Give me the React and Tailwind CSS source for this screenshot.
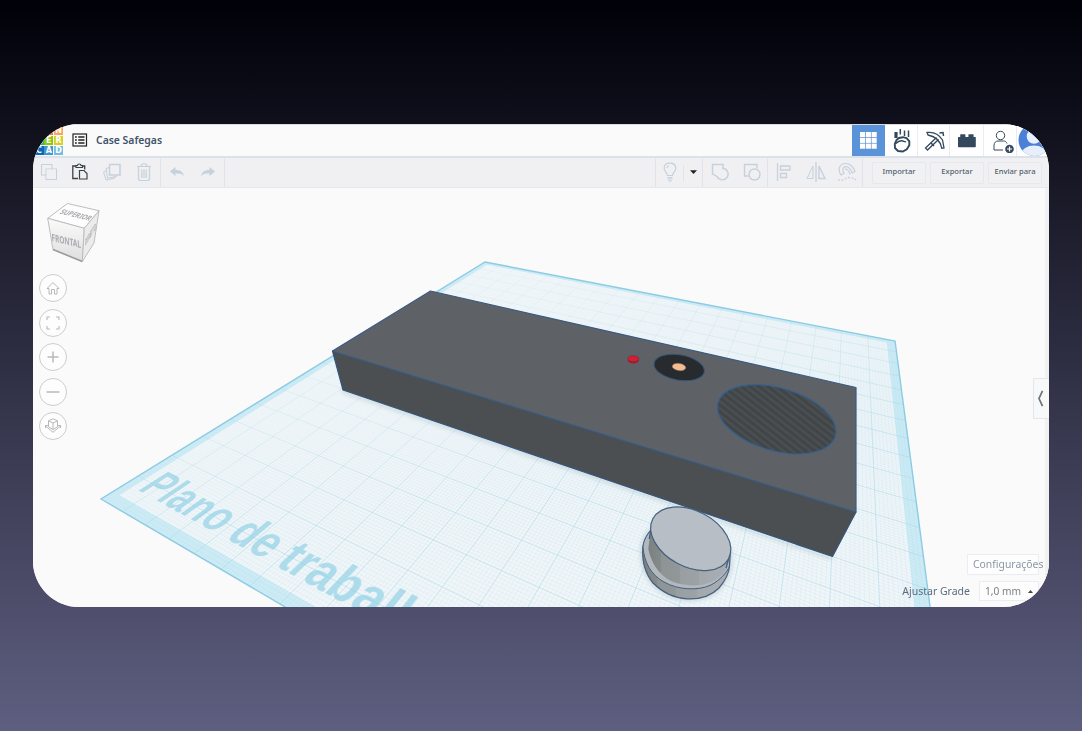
import React from 'react';

// Projective map from workplane coordinates (0..1, 0..1) to the scene.
const H = { a: 363.5, b: 887.9, c: 101, d: -19, e: 35.2, f: 499, g: -0.528, h: 1.039 };
const project = (u, v) => {
  const w = 1 + H.g * u + H.h * v;
  return [(H.a * u + H.b * v + H.c) / w, (H.d * u + H.e * v + H.f) / w];
};
const pts = (list) => list.map(([u, v]) => project(u, v).map((n) => n.toFixed(2)).join(',')).join(' ');
const line = (u1, v1, u2, v2) => {
  const [x1, y1] = project(u1, v1);
  const [x2, y2] = project(u2, v2);
  return `M${x1.toFixed(2)} ${y1.toFixed(2)}L${x2.toFixed(2)} ${y2.toFixed(2)}`;
};

const INSET = 0.0155;
const CELLS = 20;
const gridPath = (n) => {
  let d = '';
  for (let i = 1; i < n; i++) {
    d += line(i / n, 0, i / n, 1) + line(0, i / n, 1, i / n);
  }
  return d;
};
const MAJOR = gridPath(CELLS);
const MINOR = gridPath(CELLS * 10);

// The label lies on a 1000 x 1000 sheet whose y axis points towards the viewer.
const S = 1000;
const OX = 33;
const OY = 188;
const labelMatrix = (() => {
  const k = 1 + H.h;
  const a = H.a / S, b = -H.b / S, c = H.c + H.b;
  const d = H.d / S, e = -H.e / S, f = H.f + H.e;
  const g = H.g / S, h = -H.h / S;
  const m = [
    a - OX * g, d - OY * g, 0, g,
    b - OX * h, e - OY * h, 0, h,
    0, 0, 1, 0,
    c - OX * k, f - OY * k, 0, k,
  ];
  return `matrix3d(${m.join(',')})`;
})();

const Ico = ({ w = 20, h = 20, children, className = '' }) => (
  <svg width={w} height={h} viewBox={`0 0 ${w} ${h}`} fill="none" className={className} stroke="currentColor">
    {children}
  </svg>
);

const LOGO = [
  ['T', 'bg-[#e0403c]'], ['I', 'bg-[#f0703c]'], ['N', 'bg-[#f9a45c]'],
  ['K', 'bg-[#2fb574]'], ['E', 'bg-[#8cc810]'], ['R', 'bg-[#d6d02c]'],
  ['C', 'bg-[#0a68b4]'], ['A', 'bg-[#4096d0]'], ['D', 'bg-[#76bce0]'],
];

function Logo() {
  return (
    <div className="grid grid-cols-3 gap-x-[0.7px] gap-y-[1px] content-start ml-[1.5px] mt-[1px] w-[28.5px] shrink-0">
      {LOGO.map(([ch, bg]) => (
        <span key={ch} className={`${bg} h-[9px] text-white font-['DejaVu_Sans'] text-[8px] leading-[9px] font-bold text-center`}>{ch}</span>
      ))}
    </div>
  );
}

function Header() {
  return (
    <header className="flex h-[34px] shrink-0 border-b-2 border-[#dce2ea] border-t border-t-[#d9d9de] bg-[#fafafa]">
      <Logo />
      <div className="flex items-center pl-[8.5px] gap-[8.500px] h-[29px]">
        <Ico w={16} h={14} className="text-[#222]">
          <rect x="1" y="1" width="13.5" height="12" strokeWidth="1.2" />
          <path d="M3 4h1.8M3 7h1.8M3 10h1.8M6.2 4h6.3M6.2 7h6.3M6.2 10h6.3" strokeWidth="1.6" />
        </Ico>
        <h1 className="pt-[2px] text-[10.4px] font-semibold text-[#40536a] whitespace-nowrap leading-none">Case Safegas</h1>
      </div>
      <nav className="ml-auto flex h-[31px] text-[#34495e] bg-white">
        <div className="w-[33px] bg-[#5b93d8] text-white flex items-center justify-center">
          <svg width="17" height="17" viewBox="0 0 17 17" fill="#fff">
            {[0, 1, 2].map((r) => [0, 1, 2].map((c) => (
              <rect key={`${r}${c}`} x={c * 5.8} y={r * 5.8} width="5.1" height="5.1" />
            )))}
          </svg>
        </div>
        <div className="w-[33px] border-r border-[#ececf0] flex items-center justify-center">
          <Ico w={20} h={26} className="ml-[2px]">
            <path d="M4.500 12L7 10l4-.8 3.500 1 2.800 3v4l-2.500 4-4 2.300-4.800-.5-3-3-.2-4z" strokeWidth="1.900" />
            <path d="M3.800 15.500c2-2 4-3 6-2.800 2 .2 3 1.600 4.200.8" strokeWidth="1.500" />
            <path d="M8.300 1v5.500M12.500 2.500v5.500M16.500 2.500v6.500" strokeWidth="1.500" />
            <path d="M4 4v6" strokeWidth="3.200" />
          </Ico>
        </div>
        <div className="w-[32px] border-r border-[#ececf0] flex items-center justify-center">
          <Ico w={22} h={22} className="ml-[2px]">
            <path d="M3 2.500c6-.8 12 2 15.500 7.500l1.500 8-2.200.3C16.500 11 11.500 6.500 4 5z" strokeWidth="1.3" />
            <path d="M12.500 7.500L1.500 18l2 2L14.500 9.500" strokeWidth="1.300" />
            <path d="M7 13l3 3M15.500 3l3.500-.5.500 3.500" strokeWidth="1.500" />
          </Ico>
        </div>
        <div className="w-[34px] border-r border-[#ececf0] flex items-center justify-center">
          <svg width="18" height="14" viewBox="0 0 18 14" fill="currentColor" className="ml-px">
            <path d="M.5 3h1.700V.8q0-.5.5-.5h4.200q.5 0 .5.5V3h3V.8q0-.5.5-.5h4.200q.5 0 .5.5V3h1.700q.5 0 .5.500v9q0 .8-.8.8H.8q-.8 0-.8-.8v-9q0-.5.5-.500z" />
          </svg>
        </div>
        <div className="w-[33px] border-r border-[#ececf0] flex items-center justify-center">
          <Ico w={24} h={24} className="ml-[4px] mt-px">
            <circle cx="10.500" cy="6.500" r="4.200" strokeWidth="1" />
            <path d="M13 21H4v-4.500c0-3 2-4.500 4-4.500h5.500c1.800 0 3 1 3.500 2.500" strokeWidth="1" />
            <circle cx="19.500" cy="20" r="4.300" fill="currentColor" stroke="none" />
            <path d="M19.500 17.500v5M17 20h5" stroke="#fff" strokeWidth="1.200" />
          </Ico>
        </div>
        <div className="w-[32px] overflow-hidden">
          <svg width="32" height="31" viewBox="0 0 32 31">
            <clipPath id="avatar"><circle cx="17.500" cy="15" r="16" /></clipPath>
            <g clipPath="url(#avatar)">
              <rect width="34" height="32" fill="#4a80d6" />
              <circle cx="17" cy="11.500" r="7.300" fill="#eaf1fc" />
              <ellipse cx="17" cy="29" rx="12.500" ry="8.500" fill="#e6effb" />
            </g>
          </svg>
        </div>
      </nav>
    </header>
  );
}

const Cell = ({ w, border = false, dark = false, children }) => (
  <div className={`${w} h-full flex items-center justify-center shrink-0 pb-px ${border ? 'border-r border-[#e0e4ea]' : ''} ${dark ? 'text-[#3b4347]' : 'text-[#c5d1dc]'}`}>
    {children}
  </div>
);

const ToolButton = ({ w, children }) => (
  <button className={`${w} h-[22px] rounded-[2px] border border-[#e5e8ec] bg-[#f1f1f3] pb-[2px] text-[7.600px] font-medium text-[#51616f] leading-none whitespace-nowrap`}>
    {children}
  </button>
);

function Toolbar() {
  return (
    <div className="flex h-[30px] shrink-0 bg-[#f0eff1] border-b border-[#e5e7ec]">
      <Cell w="w-[31px]"><Ico w={18} h={18}><path d="M1.500 1.500h10.500v10.500H1.500zM6 6h10.500v10.500H6z" strokeWidth="1.100" /><path d="M6.600 6.600h9.300v9.300H6.600z" fill="#f0eff1" stroke="none" /></Ico></Cell>
      <Cell w="w-[31px]" dark>
        <Ico w={18} h={18}>
          <path d="M7 15.500H1.800V3H5M11.500 3h2.200v3.500" strokeWidth="1.300" />
          <path d="M5 4.500V2.500h1.500c0-2 3.500-2 3.500 0h1.500v2z" strokeWidth="1.200" />
          <path d="M8.500 7.500h4.500l3 3v5.500H8.500z" strokeWidth="1.200" />
        </Ico>
      </Cell>
      <Cell w="w-[34px]"><Ico w={20} h={20}><path d="M7.500 2.500H18v10.500H7.500z" strokeWidth="1.500" /><path d="M7 5.500L4 6.500 5.500 16l9-1.500v-1M4 9l-2.500 1 2.500 8 9-2v-1.500" strokeWidth="1" /></Ico></Cell>
      <Cell w="w-[32px]" border>
        <Ico w={16} h={20} className="mr-px"><path d="M1 4.500h14M5 4.500C5 .8 11 .8 11 4.500M2.500 5v11.500q0 2 2 2h7q2 0 2-2V5M5.800 7.500v8.500M8 7.500v8.500M10.200 7.500v8.500" strokeWidth="1.200" /></Ico>
      </Cell>
      <Cell w="w-[31px]"><svg width="16" height="12" viewBox="0 0 16 12" fill="currentColor"><path d="M6.500 1v3c5 0 7.500 2 8.500 6-2-2.200-4.500-2.800-8.500-2.800V10L1 5.500z" /></svg></Cell>
      <Cell w="w-[33px]" border><svg width="16" height="12" viewBox="0 0 16 12" fill="currentColor" className="mr-px"><path d="M9.500 1v3C4.500 4 2 6 1 10c2-2.200 4.500-2.800 8.500-2.800V10L15 5.500z" /></svg></Cell>
      <div className="ml-auto flex border-l border-[#e0e4ea] h-full items-center">
        <Cell w="w-[27px]">
          <Ico w={14} h={20}><path d="M4.500 13.500c0-3-3.300-3.500-3.300-7.300C1.200 3 3.800 1.200 7 1.200s5.800 1.800 5.800 5c0 3.800-3.300 4.300-3.300 7.300zM4.500 15.500h5M4.500 17h5M5.500 18.800h3M4 6c.2-1 .8-1.800 2-2" strokeWidth="1.200" /></Ico>
        </Cell>
        <div className="w-px h-[16px] bg-[#e0e4ea]" />
        <Cell w="w-[19px]" border><svg width="7" height="4" viewBox="0 0 7 4"><path d="M0 .2h7L3.500 3.900z" fill="#222" /></svg></Cell>
        <Cell w="w-[33px]"><Ico w={18} h={18}><path d="M1.500 1.500h10.500v3.800a5.800 5.800 0 1 1-6 8.200L1.500 11z" strokeWidth="1.400" /></Ico></Cell>
        <Cell w="w-[32px]" border><Ico w={18} h={18}><path d="M5.500 13H1.500V1.500H14v4" strokeWidth="1.400" /><circle cx="11.500" cy="11.500" r="5.500" strokeWidth="1.400" /></Ico></Cell>
        <Cell w="w-[32px]"><Ico w={16} h={18}><path d="M1.500 0v18" strokeWidth="1.200" /><path d="M4.500 3h9.500v4H4.500zM4.500 10.500h6v4h-6z" strokeWidth="1.300" /></Ico></Cell>
        <Cell w="w-[31px]"><Ico w={20} h={20}><path d="M10 0v20" strokeWidth="1.300" /><path d="M7 4v12.500H1z" strokeWidth="1" /><path d="M13 4v12.500h6z" strokeWidth="1.400" /></Ico></Cell>
        <Cell w="w-[32px]" border>
          <Ico w={20} h={20}>
            <path d="M4 13C0 7 3 1.500 8.500 1.500c5 0 8 4 9.500 8l-2.800 1.500C14 8 12 4.500 8.700 4.700 5.500 5 5 8 7 11.200z" strokeWidth="1.200" />
            <path d="M8 7.500c2-1 3 .5 4 2.500l1.300 2.500" strokeWidth="1.200" />
            <path d="M1 17.500c5 2.500 8-2 11-2s5 1 7 2.500" strokeWidth="1.300" strokeDasharray="2 1.500" />
          </Ico>
        </Cell>
        <div className="flex pl-[9px] pr-[7px]">
          <ToolButton w="w-[54px]">Importar</ToolButton>
          <div className="w-[4px]" />
          <ToolButton w="w-[54px]">Exportar</ToolButton>
          <div className="w-[4px]" />
          <ToolButton w="w-[54px]">Enviar para</ToolButton>
        </div>
      </div>
    </div>
  );
}

function Workplane() {
  const o = INSET, i = 1 - INSET;
  return (
    <svg className="absolute inset-0" width="1016" height="419" viewBox="33 188 1016 419">
      <defs>
        <linearGradient id="minorFade" gradientUnits="userSpaceOnUse" x1="560" y1="262" x2="600" y2="480">
          <stop offset="0" stopColor="#8fd0e2" stopOpacity=".015" />
          <stop offset=".5" stopColor="#8fd0e2" stopOpacity=".08" />
          <stop offset="1" stopColor="#8fd0e2" stopOpacity=".24" />
        </linearGradient>
        <linearGradient id="majorFade" gradientUnits="userSpaceOnUse" x1="560" y1="262" x2="600" y2="480">
          <stop offset="0" stopColor="#93cfe0" stopOpacity=".09" />
          <stop offset=".5" stopColor="#93cfe0" stopOpacity=".22" />
          <stop offset="1" stopColor="#93cfe0" stopOpacity=".38" />
        </linearGradient>
      </defs>
      <polygon points={pts([[0, 0], [1, 0], [1, 1], [0, 1]])} fill="#cdebf5" />
      <polygon points={pts([[o, o], [i, o], [i, i], [o, i]])} fill="#f0f5f8" />
      <path d={MINOR} stroke="url(#minorFade)" strokeWidth="0.5" />
      <path d={MAJOR} stroke="url(#majorFade)" strokeWidth="0.9" fill="none" />
      <polygon points={pts([[0, 0], [1, 0], [1, 1], [0, 1]])} fill="none" stroke="#8ccbe3" strokeWidth="1.400" />
    </svg>
  );
}

const RING = 'M642.800 548C642 560 644 572 653 583C662 592 674 598 687 598.800C700 599.500 711 596 719 588C725 581 729 574 729.500 566L730 553L700 530L651 530C646 536 643.500 541 642.800 548Z';
const SLATS = Array.from({ length: 26 }, (_, i) => `M-70 ${-70 + i * 5.5}H70`).join('');

function Solids() {
  return (
    <svg className="absolute inset-0" width="1016" height="419" viewBox="33 188 1016 419">
      <defs>
        <clipPath id="grille"><ellipse cx="776.700" cy="419.300" rx="61" ry="31.500" transform="rotate(16 776.700 419.300)" /></clipPath>
        <linearGradient id="side">
          <stop offset="0" stopColor="#7c8081" /><stop offset=".16" stopColor="#858a8b" />
          <stop offset=".16" stopColor="#8e9394" /><stop offset=".38" stopColor="#92989a" />
          <stop offset=".38" stopColor="#999fa1" /><stop offset=".62" stopColor="#9ca2a5" />
          <stop offset=".62" stopColor="#a3a8ac" /><stop offset="1" stopColor="#a9aeb5" />
        </linearGradient>
        <filter id="soft"><feGaussianBlur stdDeviation="2" /></filter>
      </defs>
      <path d="M342 391L832 558" stroke="#8aa6b4" strokeWidth="3" opacity=".4" filter="url(#soft)" />
      <g strokeLinejoin="round">
        <path d="M332.500 351L856 512L832.500 556.500L343 390Z" fill="#4b4f51" stroke="#34557c" strokeWidth="1.200" />
        <path d="M430.500 291L856 387.500V512L332.500 351Z" fill="#5e6266" stroke="#3a5c84" strokeWidth="1.200" />
      </g>
      <ellipse cx="633.300" cy="360.500" rx="5.500" ry="3" fill="#b0141f" />
      <ellipse cx="633.300" cy="358.700" rx="5.600" ry="3" fill="#dc1c2a" stroke="#5c3a5e" strokeWidth=".8" />
      <ellipse cx="679.200" cy="367.500" rx="25.500" ry="12.700" transform="rotate(10 679.200 367.500)" fill="#282b2e" stroke="#35567d" strokeWidth="1" />
      <ellipse cx="679" cy="367" rx="6.800" ry="3.600" transform="rotate(8 679 367)" fill="#f3bd94" stroke="#8a6a58" strokeWidth=".5" />
      <g clipPath="url(#grille)">
        <rect x="715" y="382" width="124" height="76" fill="#494e50" />
        <path d={SLATS} transform="translate(776.700 419.300) rotate(38)" stroke="#414547" strokeWidth="2.700" />
      </g>
      <ellipse cx="776.700" cy="419.300" rx="61" ry="31.500" transform="rotate(16 776.700 419.300)" fill="none" stroke="#35618f" strokeWidth="1.300" />

      <path d={RING} stroke="#9fb4c0" strokeWidth="4" fill="none" opacity=".5" filter="url(#soft)" />
      <path d={RING} fill="url(#side)" stroke="#46607e" strokeWidth="1.200" />
      <path d="M643 547C644 562 651 575 664 582C678 590 698 591 711 585C720 580 727 573 729.500 566L730 553L700 530L651 530C646 536 643.500 541 643 547Z" fill="#b1b8be" stroke="#46607e" strokeWidth="1" />
      <path d="M650.500 531L648.300 549C651 562 658 574 671 581C685 587 704 587 715 580C723 575 728 569 728.500 563L730.500 552Z" fill="url(#side)" />
      <path d="M650.500 531L649.300 539M730.500 552L726 568" stroke="#46607e" strokeWidth="1.300" fill="none" />
      <ellipse cx="690.700" cy="538.700" rx="42.800" ry="28" transform="rotate(27.800 690.700 538.700)" fill="#b7bec5" stroke="#46607e" strokeWidth="1.200" />
    </svg>
  );
}

function ViewCube() {
  return (
    <svg width="56" height="62" viewBox="46 201 56 62" className="block overflow-visible">
      <defs>
        <linearGradient id="cubeFront" x1="0" y1="0" x2="0" y2="1"><stop offset="0" stopColor="#fbfbfb" /><stop offset="1" stopColor="#dedede" /></linearGradient>
      </defs>
      <g stroke="#bdbdbd" strokeWidth="1" strokeLinejoin="round">
        <path d="M67.500 203.500L99 210.700L84.300 228.300L47.700 218.300Z" fill="#fdfdfd" />
        <path d="M47.700 218.300L84.300 228.300L82.300 261.500L53 249.500Z" fill="url(#cubeFront)" />
        <path d="M84.300 228.300L99 210.700L94 243L82.300 261.500Z" fill="#ececec" />
        <path d="M53 249.500L82.300 261.500" stroke="#9c9c9c" strokeWidth="1.400" />
      </g>
      <g fill="#a9abb0" fontWeight="700" fontFamily="'Noto Sans', sans-serif">
        <text transform="matrix(.96 .24 .05 1 51.800 240.800)" fontSize="10" textLength="30.500" lengthAdjust="spacingAndGlyphs">FRONTAL</text>
        <text transform="matrix(.97 .23 -.75 .75 59 213.500)" fontSize="8" textLength="31" lengthAdjust="spacingAndGlyphs">SUPERIOR</text>
        <text transform="matrix(.55 -.9 0 1 85.300 246)" fontSize="9" textLength="19" lengthAdjust="spacingAndGlyphs">DIREITO</text>
      </g>
    </svg>
  );
}

const Round = ({ children }) => (
  <button className="w-[28px] h-[28px] rounded-full border border-[#cccccc] bg-[#fdfdfd] text-[#b9b9b9] flex items-center justify-center">
    {children}
  </button>
);

function Viewport() {
  return (
    <main className="relative flex-1 overflow-hidden bg-[#fafafa]">
      <Workplane />
      <div
        className="absolute left-0 top-0 w-[1000px] h-[1000px] origin-top-left"
        style={{ transform: labelMatrix }}
      >
        <span className="absolute left-[26px] top-[906px] font-['Liberation_Sans'] font-bold text-[62px] leading-[80px] text-[#84cbe2]/60 whitespace-nowrap">
          Plano de trabalho
        </span>
      </div>
      <Solids />
      <div className="absolute right-0 top-0 h-full w-[4px] bg-[#f1f1f3]" />
      <div className="relative flex h-full justify-between">
        <div className="flex flex-col pl-[6.300px] pt-[13px]">
          <div className="pl-[6.700px]"><ViewCube /></div>
          <div className="flex flex-col gap-[6.500px] pt-[11px]">
            <Round><Ico w={14} h={14}><path d="M1 7.500L7 1.500l6 6H11V13H8.500V8.500h-3V13H3V7.500z" strokeWidth="1" /></Ico></Round>
            <Round><Ico w={14} h={14}><path d="M1 4V1h3M10 1h3v3M13 10v3h-3M4 13H1v-3" strokeWidth="1.100" /></Ico></Round>
            <Round><Ico w={12} h={12}><path d="M6 .5v11M.5 6h11" strokeWidth="1.500" /></Ico></Round>
            <Round><Ico w={14} h={12}><path d="M.5 6h13" strokeWidth="1.500" /></Ico></Round>
            <Round><Ico w={18} h={16}><path d="M9 .8l4.500 2v6L9 11.500 4.500 8.800v-6zM4.500 2.800L9 5l4.500-2.200M9 5v6.500M1 7.500l8 6.800 8-6.800M1.500 10V7.500H4M16.500 10V7.500H14" strokeWidth="1" /></Ico></Round>
          </div>
        </div>
        <div className="flex flex-col items-end pt-[190px]">
          <button className="w-[16px] h-[41px] border border-r-0 border-[#e2e7eb] bg-[#f6f8fa] text-[#6e7376] flex items-center justify-center">
            <Ico w={7} h={17} className="mr-[2px]"><path d="M5.500 .8L2 8.500l3.500 7.700" strokeWidth="1.700" /></Ico>
          </button>
          <div className="mt-[135px] mr-[10px] w-[72px] h-[21px] border border-[#ebedf0] bg-[#fdfdfd] pl-[5px] text-[10.400px] leading-[18px] text-[#8b97a5] whitespace-nowrap">
            Configurações
          </div>
          <div className="mt-[6px] mr-[10px] flex items-center text-[10.500px] leading-[18px] whitespace-nowrap">
            <span className="text-[#5b6c7e] pr-[9px]">Ajustar Grade</span>
            <span className="w-[60px] h-[20px] border border-[#ebedf0] bg-[#fdfdfd] pl-[5px] text-[10.200px] text-[#7d8286] flex items-center">
              1,0 mm
              <svg width="5" height="3" viewBox="0 0 5 3" className="ml-[7px]"><path d="M0 3L2.500 0 5 3z" fill="#444" /></svg>
            </span>
          </div>
        </div>
      </div>
    </main>
  );
}

export default function App() {
  return (
    <div className="w-[1082px] h-[731px] overflow-hidden bg-linear-to-b/srgb from-[#000008] to-[#5e5e80] px-[33px] pt-[124px] font-['Noto_Sans',sans-serif]">
      <div className="w-[1016px] h-[483px] rounded-[46px] overflow-hidden bg-[#fafafa] flex flex-col">
        <Header />
        <Toolbar />
        <Viewport />
      </div>
    </div>
  );
}
